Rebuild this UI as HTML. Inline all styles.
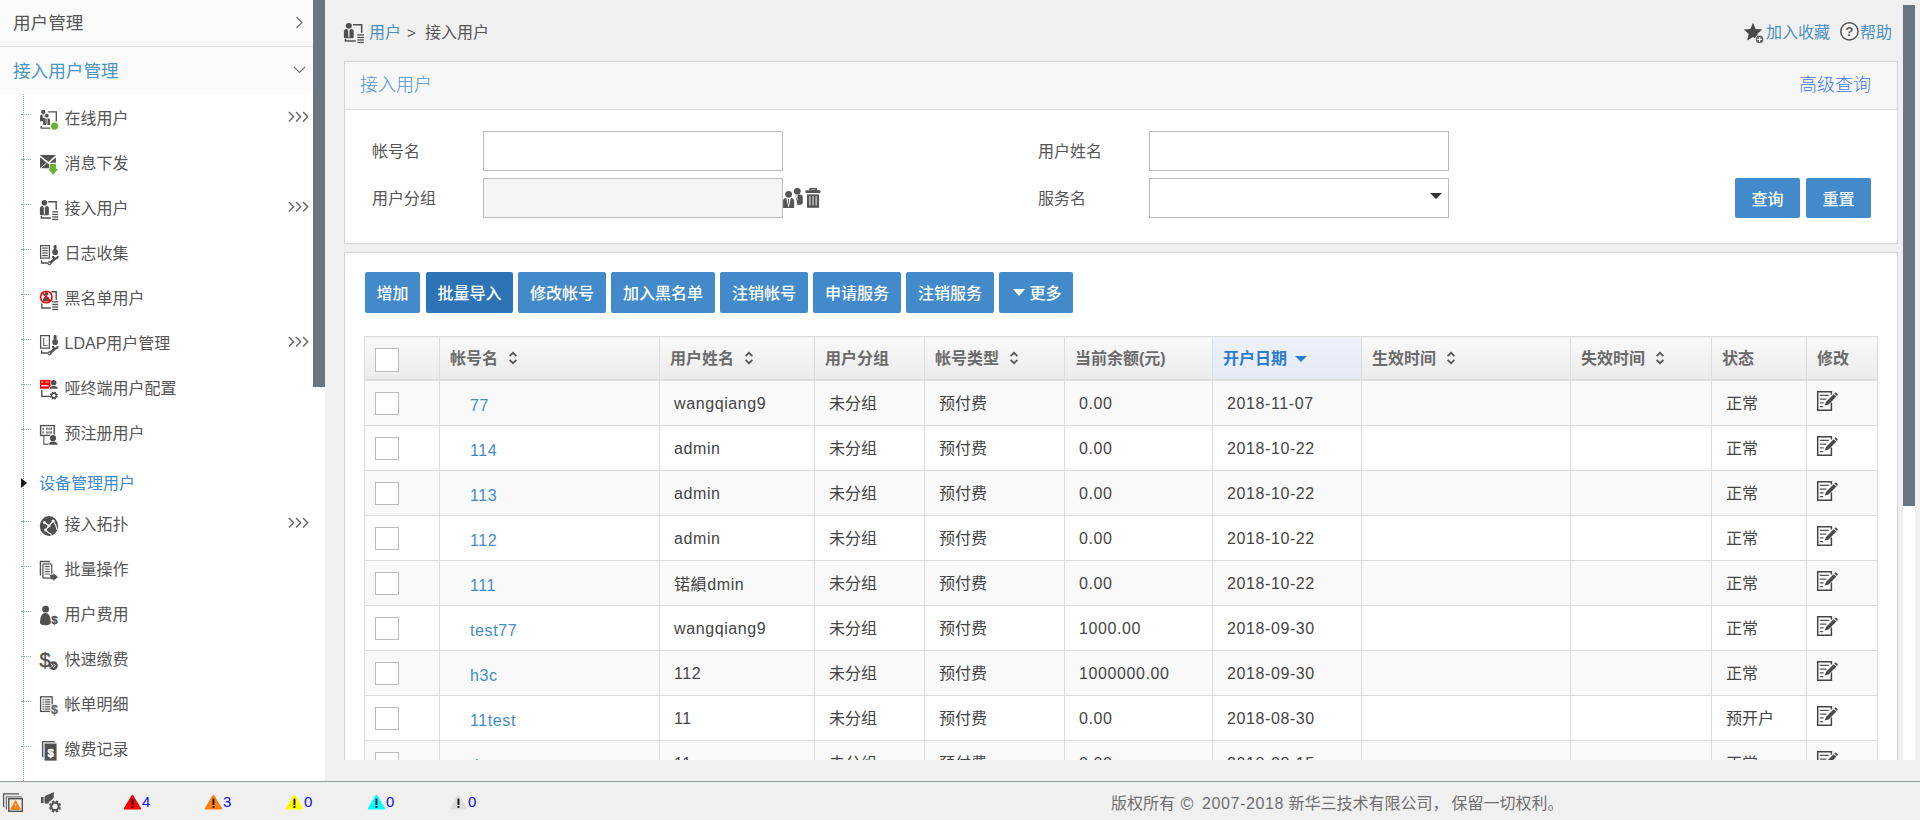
<!DOCTYPE html>
<html lang="zh-CN">
<head>
<meta charset="utf-8">
<title>接入用户</title>
<style>
*{box-sizing:border-box;margin:0;padding:0}
html,body{width:1920px;height:820px;overflow:hidden;background:#f0f0f0}
body{font-family:"Liberation Sans","Noto Sans CJK SC",sans-serif;font-size:16px;color:#555;position:relative}
a{text-decoration:none;color:#428bca}
.abs{position:absolute}
/* ---------- sidebar ---------- */
#side{position:absolute;left:0;top:0;width:325px;height:781px;background:#fff;overflow:hidden}
#side .thumb{position:absolute;left:313px;top:0;width:12px;height:387px;background:#69767f}
.acc{position:absolute;left:0;width:313px;height:47px;background:#fafafa;font-size:17.6px;line-height:26px;padding:10px 0 0 13px;color:#555}
.acc.a1{top:0;border-bottom:1px solid #e3e3e3}
.acc.a2{top:47px;color:#4a97c4;padding-top:11px}
.acc svg{position:absolute}
.tree-v{position:absolute;left:23px;top:94px;width:1px;height:687px;background:repeating-linear-gradient(#8aaed2 0 1px,transparent 1px 2px)}
.item{position:absolute;left:0;width:313px;height:30px}
.item .stub{position:absolute;left:21px;top:10px;width:10px;height:1px;background:linear-gradient(90deg,#8aaed2 0 4px,transparent 4px 5px,#8aaed2 5px 6px,transparent 6px 7px,#8aaed2 7px 8px,transparent 8px 9px,#8aaed2 9px 10px)}
.item .ic{position:absolute;left:36px;top:0}
.item .txt{position:absolute;left:64.5px;top:0;line-height:30px;font-size:16px;color:#555;white-space:nowrap}
.item .more{position:absolute;left:288px;top:7px;width:22px;height:12px}
.grp{position:absolute;left:39px;top:469px;line-height:30px;font-size:16px;color:#3d8ad2}
.grp-arrow{position:absolute;left:20.5px;top:477.6px;width:0;height:0;border-left:6.6px solid #1c1c1c;border-top:5px solid transparent;border-bottom:5px solid transparent;z-index:2}
/* ---------- main ---------- */
#main{position:absolute;left:325px;top:0;width:1595px;height:760px;overflow:hidden}
.crumb{position:absolute;top:18px;line-height:30px;font-size:16px;white-space:nowrap}
.panel{position:absolute;left:19px;width:1554px;background:#fff;border:1px solid #d4d4d4}
.phead{position:absolute;left:0;top:0;width:100%;height:48px;background:#f7f7f7;border-bottom:1px solid #ddd}
.lbl{position:absolute;line-height:30px;font-size:16px;color:#555;white-space:nowrap}
.inp{position:absolute;width:300px;height:40px;border:1px solid #bcbcbc;background:#fff}
.btn{position:absolute;height:41px;line-height:44px;overflow:hidden;background:#438aca;color:#fff;font-weight:500;font-size:16px;text-align:center;border-radius:2px;white-space:nowrap}
.btn.dk{background:#2c74b5}
.vthumb{position:absolute;left:1578px;top:5px;width:12px;height:501px;background:#69767f}
.vtrack{position:absolute;left:1578px;top:506px;width:12px;height:254px;background:#fff}
/* table */
#tb{position:absolute;left:19px;top:83px;border-collapse:collapse;table-layout:fixed;font-size:16px;color:#444}
#tb th,#tb td{border:1px solid #ddd;height:45px;padding:0;text-align:left;white-space:nowrap;overflow:hidden;vertical-align:middle}
#tb th{height:44px;font-weight:bold;color:#6b6b6b;padding-left:10px;padding-bottom:4px;background:linear-gradient(#ddd,#ddd) bottom/100% 1px no-repeat,linear-gradient(#f9f9f9,#ebebeb)}
#tb th.sorted{color:#2e7bcf;background:linear-gradient(#ddd,#ddd) bottom/100% 1px no-repeat,linear-gradient(#eef2f9,#e4e9f3)}
#tb td{padding-left:14px}
#tb tr.o td{background:#f9f9f9}
#tb tr.e td{background:#fff}
#tb td.c,#tb th.c{padding-left:10px}
#tb td.z{padding-bottom:2px}
.cb{display:block;width:24px;height:24px;border:1px solid #bbb;background:#fff}
#tb td .cb{height:23px}
#tb th .cb{position:relative;top:3px}
#tb td.l{letter-spacing:.6px;padding-top:2px}
#tb td.n{padding-left:30px}
#tb td.n{letter-spacing:.6px;padding-top:5px}
.srt{display:inline-block;width:10px;height:14px;margin-left:9.7px;vertical-align:-1px}
/* footer */
#foot{position:absolute;left:0;top:781px;width:1920px;height:39px;background:#f0f0f0;border-top:1px solid #8c999e}
.al{position:absolute;top:11px;height:18px;line-height:18px;font-size:15px;color:#0c0cf8;white-space:nowrap}
.al svg{position:absolute;left:0;top:1px}
.cp{position:absolute;top:7px;line-height:30px;font-size:16px;color:#6e6e6e;white-space:nowrap}
</style>
</head>
<body>
<div id="side">
  <div class="acc a1">用户管理
    <svg style="left:295px;top:16px" width="9" height="13" viewBox="0 0 9 13"><path d="M1.5 1 L7 6.5 L1.5 12" fill="none" stroke="#777" stroke-width="1.2"/></svg>
  </div>
  <div class="acc a2">接入用户管理
    <svg style="left:293px;top:19px" width="13" height="8" viewBox="0 0 13 8"><path d="M1 1 L6.5 6.5 L12 1" fill="none" stroke="#777" stroke-width="1.2"/></svg>
  </div>
  <div class="tree-v"></div>
  <div class="item" style="top:104px"><span class="stub" style="top:10px"></span><svg class="ic" width="28" height="30" viewBox="0 0 28 30" ><circle cx="7.3" cy="7.9" r="2.15" fill="#505050"/><path d="M4 16.6 L4.1 12 Q4.4 10.5 6 10.5 H8.2 V17.2 H4.6 Q4 17.2 4 16.6 Z" fill="#505050"/><path d="M6.2 10.6 H8.4 V14 H6.8 Z" fill="#ddd"/><circle cx="10.8" cy="11.7" r="2.15" fill="#505050" stroke="#fff" stroke-width="0.5"/><path d="M7.1 20.3 L7.2 15.8 Q7.5 14.3 9 14.3 H12.2 Q13.8 14.3 14 15.8 L14.1 20.3 Q14.1 20.9 13.5 20.9 H7.7 Q7.1 20.9 7.1 20.3 Z" fill="#505050"/><path d="M9.5 14.3 L10 20.9 H11.4 L11.9 14.3 Z" fill="#e4e4e4"/><path d="M10.7 15 V20" stroke="#505050" stroke-width="0.7"/><path d="M12.2 7.9 H20.3 V17.4" fill="none" stroke="#505050" stroke-width="1.3"/><path d="M5.2 22 V24.1 H14.2" fill="none" stroke="#505050" stroke-width="1.4"/><circle cx="18.5" cy="22.1" r="3.6" fill="#6bb130"/></svg><span class="txt">在线用户</span><svg class="more" width="23" height="12" viewBox="0 0 23 12"><path d="M1 0.8 L5.8 5.7 L1 10.6 M8.4 0.8 L13.2 5.7 L8.4 10.6 M15.8 0.8 L20.6 5.7 L15.8 10.6" fill="none" stroke="#666" stroke-width="1.5"/></svg></div>
  <div class="item" style="top:149px"><span class="stub" style="top:10px"></span><svg class="ic" width="28" height="30" viewBox="0 0 28 30" ><path d="M4 5.9 H19.9 V13.7 H13 V19.2 H4 Z" fill="#505050"/><path d="M3.6 6.9 L12.4 13.9 L20.3 6.9" fill="none" stroke="#fff" stroke-width="1.5"/><path d="M4.2 19.4 L10.6 14" fill="none" stroke="#fff" stroke-width="1"/><path d="M13.7 15 H19.9 V19.9 H22 L17.2 25.8 L12.4 19.9 H13.7 Z" fill="#6bb130"/></svg><span class="txt">消息下发</span></div>
  <div class="item" style="top:194px"><span class="stub" style="top:10px"></span><svg class="ic" width="28" height="30" viewBox="0 0 28 30" ><circle cx="8.4" cy="8.8" r="2.8" fill="#505050"/><path d="M3.9000000000000004 20.1 V14.0 Q4.1000000000000005 12.0 6.300000000000001 12.0 H10.5 Q12.700000000000001 12.0 12.9 14.0 V20.1 Q12.9 21.3 11.700000000000001 21.3 H5.1000000000000005 Q3.9000000000000004 21.3 3.9000000000000004 20.1 Z" fill="#505050"/><path d="M6.9 12.0 L8.4 15.4 L9.9 12.0 Z" fill="#e8e8e8"/><path d="M7.7 15.0 L8.4 14.0 L9.1 15.0 L8.9 20.4 H7.9 Z" fill="#ddd"/><path d="M12.2 7.7 H20.2 V15.8" fill="none" stroke="#505050" stroke-width="1.4"/><path d="M5.3 22 V24 H14.8" fill="none" stroke="#505050" stroke-width="1.3"/><rect x="16.2" y="17.2" width="6" height="1.3" fill="#505050"/><rect x="16.2" y="19.8" width="6" height="1.3" fill="#505050"/><rect x="16.2" y="22.3" width="6" height="1.3" fill="#505050"/><rect x="16.2" y="24.8" width="6" height="1.3" fill="#505050"/></svg><span class="txt">接入用户</span><svg class="more" width="23" height="12" viewBox="0 0 23 12"><path d="M1 0.8 L5.8 5.7 L1 10.6 M8.4 0.8 L13.2 5.7 L8.4 10.6 M15.8 0.8 L20.6 5.7 L15.8 10.6" fill="none" stroke="#666" stroke-width="1.5"/></svg></div>
  <div class="item" style="top:239px"><span class="stub" style="top:10px"></span><svg class="ic" width="28" height="30" viewBox="0 0 28 30" ><rect x="4.6" y="6.6" width="8.8" height="12.5" fill="#fff" stroke="#505050" stroke-width="1.25"/><rect x="6.2" y="8.5" width="5.6" height="1.2" fill="#505050"/><rect x="6.2" y="11" width="5.6" height="1.2" fill="#505050"/><rect x="6.2" y="13.5" width="5.6" height="1.2" fill="#505050"/><rect x="6.2" y="16" width="5.6" height="1.2" fill="#505050"/><path d="M13.6 24.2 L19.2 19.4" stroke="#505050" stroke-width="2.6" fill="none"/><circle cx="13.5" cy="24.3" r="2.1" fill="#505050"/><circle cx="13.4" cy="24.4" r="0.85" fill="#fff"/><path d="M16.9 16.9 A2.45 2.45 0 0 0 21.8 16.9" fill="none" stroke="#505050" stroke-width="1.9"/><rect x="17.6" y="5.9" width="3" height="4.4" rx="1.2" fill="#505050"/><ellipse cx="19.1" cy="13" rx="2.9" ry="3.1" fill="#505050"/><path d="M5.6 21.2 V24 H11.6" fill="none" stroke="#505050" stroke-width="1.4"/></svg><span class="txt">日志收集</span></div>
  <div class="item" style="top:284px"><span class="stub" style="top:10px"></span><svg class="ic" width="28" height="30" viewBox="0 0 28 30" ><circle cx="10.4" cy="9.7" r="2" fill="#505050"/><path d="M7 17.2 Q7 12.2 10.3 12.2 Q13.6 12.2 13.6 17.2 Z" fill="#505050"/><path d="M15.4 7.7 H20.2 V15.8" fill="none" stroke="#505050" stroke-width="1.4"/><path d="M5.8 19.4 V24 H14.8" fill="none" stroke="#505050" stroke-width="1.4"/><rect x="16.2" y="17.2" width="6" height="1.3" fill="#505050"/><rect x="16.2" y="19.8" width="6" height="1.3" fill="#505050"/><rect x="16.2" y="22.3" width="6" height="1.3" fill="#505050"/><rect x="16.2" y="24.8" width="6" height="1.3" fill="#505050"/><circle cx="10.3" cy="13" r="5.75" fill="none" stroke="#fb0a0a" stroke-width="1.7"/><path d="M6.3 9 L14.3 17" stroke="#fb0a0a" stroke-width="1.6"/></svg><span class="txt">黑名单用户</span></div>
  <div class="item" style="top:329px"><span class="stub" style="top:10px"></span><svg class="ic" width="28" height="30" viewBox="0 0 28 30" ><rect x="4.6" y="6.6" width="8.8" height="12.5" fill="#fff" stroke="#505050" stroke-width="1.25"/><text x="6.2" y="17" font-family="Liberation Sans,sans-serif" font-size="10.5" fill="#505050">L</text><path d="M13.6 24.2 L19.2 19.4" stroke="#505050" stroke-width="2.6" fill="none"/><circle cx="13.5" cy="24.3" r="2.1" fill="#505050"/><circle cx="13.4" cy="24.4" r="0.85" fill="#fff"/><path d="M16.9 16.9 A2.45 2.45 0 0 0 21.8 16.9" fill="none" stroke="#505050" stroke-width="1.9"/><rect x="17.6" y="5.9" width="3" height="4.4" rx="1.2" fill="#505050"/><ellipse cx="19.1" cy="13" rx="2.9" ry="3.1" fill="#505050"/><path d="M5.6 21.2 V24 H11.6" fill="none" stroke="#505050" stroke-width="1.4"/></svg><span class="txt">LDAP用户管理</span><svg class="more" width="23" height="12" viewBox="0 0 23 12"><path d="M1 0.8 L5.8 5.7 L1 10.6 M8.4 0.8 L13.2 5.7 L8.4 10.6 M15.8 0.8 L20.6 5.7 L15.8 10.6" fill="none" stroke="#666" stroke-width="1.5"/></svg></div>
  <div class="item" style="top:374px"><span class="stub" style="top:10px"></span><svg class="ic" width="28" height="30" viewBox="0 0 28 30" ><rect x="4" y="5.9" width="10.7" height="8.8" fill="#fb0505"/><rect x="5.3" y="7.4" width="2" height="1.2" fill="#fff" opacity=".9"/><rect x="9.8" y="7.4" width="1" height="1.2" fill="#fff" opacity=".9"/><rect x="11.6" y="7.4" width="1" height="1.2" fill="#fff" opacity=".9"/><rect x="5.2" y="11.1" width="7.4" height="1.2" fill="#fff"/><circle cx="17.7" cy="8.7" r="3.2" fill="#fff"/><circle cx="17.7" cy="8.7" r="2.8" fill="#505050"/><path d="M13 15 Q13.2 11.4 17.7 11.6 Q22.2 11.4 22.4 15 Z" fill="#fff"/><path d="M13.6 14.7 Q13.8 12 17.7 12.1 Q21.6 12 21.9 14.7 Z" fill="#505050"/><path d="M5.8 16 V22.4 H14.4" fill="none" stroke="#505050" stroke-width="1.4"/><circle cx="17.9" cy="21.6" r="3.0" fill="#505050"/><rect x="17.05" y="17.60" width="1.7" height="1.80" rx="0.3" fill="#505050" transform="rotate(22.5 17.9 21.6)"/><rect x="17.05" y="17.60" width="1.7" height="1.80" rx="0.3" fill="#505050" transform="rotate(67.5 17.9 21.6)"/><rect x="17.05" y="17.60" width="1.7" height="1.80" rx="0.3" fill="#505050" transform="rotate(112.5 17.9 21.6)"/><rect x="17.05" y="17.60" width="1.7" height="1.80" rx="0.3" fill="#505050" transform="rotate(157.5 17.9 21.6)"/><rect x="17.05" y="17.60" width="1.7" height="1.80" rx="0.3" fill="#505050" transform="rotate(202.5 17.9 21.6)"/><rect x="17.05" y="17.60" width="1.7" height="1.80" rx="0.3" fill="#505050" transform="rotate(247.5 17.9 21.6)"/><rect x="17.05" y="17.60" width="1.7" height="1.80" rx="0.3" fill="#505050" transform="rotate(292.5 17.9 21.6)"/><rect x="17.05" y="17.60" width="1.7" height="1.80" rx="0.3" fill="#505050" transform="rotate(337.5 17.9 21.6)"/><circle cx="17.9" cy="21.6" r="1.6" fill="#fff"/></svg><span class="txt">哑终端用户配置</span></div>
  <div class="item" style="top:419px"><span class="stub" style="top:10px"></span><svg class="ic" width="28" height="30" viewBox="0 0 28 30" ><rect x="4.6" y="6.6" width="13.6" height="9.8" fill="#fff" stroke="#505050" stroke-width="1.4"/><rect x="6.3" y="8.7" width="1.7" height="2.1" fill="#777"/><rect x="10" y="8.7" width="6" height="2.1" fill="#9a9a9a"/><rect x="10" y="8.7" width="1.2" height="2.1" fill="#777"/><rect x="14.8" y="8.7" width="1.2" height="2.1" fill="#777"/><rect x="6.3" y="12.4" width="1.7" height="2.1" fill="#777"/><rect x="10" y="12.4" width="6" height="2.1" fill="#9a9a9a"/><rect x="10" y="12.4" width="1.2" height="2.1" fill="#777"/><rect x="14.8" y="12.4" width="1.2" height="2.1" fill="#777"/><path d="M7.9 17 V25.2 H13.4" fill="none" stroke="#777" stroke-width="1.4"/><circle cx="17" cy="19.2" r="3.9" fill="#fff"/><circle cx="17" cy="19.2" r="3.1" fill="#505050"/><path d="M12.4 26 Q12.6 21.6 17 22 Q21.6 21.6 22.2 26 Z" fill="#fff"/><path d="M13 25.8 Q13.4 22.4 17 22.6 Q21 22.4 21.8 25.8 Z" fill="#505050"/></svg><span class="txt">预注册用户</span></div>
  <span class="grp-arrow"></span><a class="grp">设备管理用户</a>
  <div class="item" style="top:510px"><span class="stub" style="top:11px"></span><svg class="ic" width="28" height="30" viewBox="0 0 28 30" ><ellipse cx="13" cy="16" rx="9.2" ry="9.9" fill="#505050"/><path d="M8.4 12.6 L13 15.9 L17.2 11 M13 15.9 L9.6 19.9" stroke="#fff" stroke-width="1.3" fill="none"/><path d="M17.2 11 Q20.4 14.6 21 20 M9.6 19.9 Q12 23 15.6 24.6" stroke="#fff" stroke-width="1.1" fill="none"/><circle cx="8.4" cy="12.6" r="1.5" fill="#fff"/><circle cx="13" cy="15.9" r="1.5" fill="#fff"/><circle cx="17.2" cy="11" r="1.5" fill="#fff"/><circle cx="9.6" cy="19.9" r="1.5" fill="#fff"/></svg><span class="txt">接入拓扑</span><svg class="more" width="23" height="12" viewBox="0 0 23 12"><path d="M1 0.8 L5.8 5.7 L1 10.6 M8.4 0.8 L13.2 5.7 L8.4 10.6 M15.8 0.8 L20.6 5.7 L15.8 10.6" fill="none" stroke="#666" stroke-width="1.5"/></svg></div>
  <div class="item" style="top:555px"><span class="stub" style="top:11px"></span><svg class="ic" width="28" height="30" viewBox="0 0 28 30" ><path d="M4.4 20.6 V6.5 H14" fill="none" stroke="#505050" stroke-width="1.3"/><rect x="6.9" y="8.9" width="8.8" height="14" rx="0.8" fill="#fff" stroke="#6e6e6e" stroke-width="1.5"/><rect x="8.8" y="10.9" width="5" height="1.3" fill="#555"/><rect x="8.8" y="13.5" width="5" height="1.3" fill="#888"/><rect x="8.8" y="15.9" width="5" height="1.3" fill="#555"/><rect x="8.8" y="18.4" width="5" height="1.3" fill="#888"/><path d="M14.3 20 H17.4 V18.2 L21.9 22.1 L17.4 26 V24.3 H14.3 Z" fill="#505050" stroke="#fff" stroke-width="0.7" paint-order="stroke"/></svg><span class="txt">批量操作</span></div>
  <div class="item" style="top:600px"><span class="stub" style="top:11px"></span><svg class="ic" width="28" height="30" viewBox="0 0 28 30" ><circle cx="9.6" cy="9.2" r="3.4" fill="#505050"/><path d="M4 22.6 Q4 13 9.4 13 Q14.6 13 14.8 22.6 Q14.6 25.2 9.4 25.2 Q4.2 25.2 4 22.6 Z" fill="#505050"/><text x="15.3" y="23.8" font-family="Liberation Sans,sans-serif" font-weight="bold" font-size="11.6" fill="#505050" stroke="#505050" stroke-width="0.3">$</text></svg><span class="txt">用户费用</span></div>
  <div class="item" style="top:645px"><span class="stub" style="top:11px"></span><svg class="ic" width="28" height="30" viewBox="0 0 28 30" ><text x="3.4" y="21.5" font-family="Liberation Sans,sans-serif" font-size="20" fill="#505050" stroke="#505050" stroke-width="0.4">$</text><circle cx="17.4" cy="20.7" r="4.4" fill="#505050"/><path d="M14.9 18.8 L16.7 20.7 L14.9 22.6 M17.5 18.8 L19.3 20.7 L17.5 22.6" fill="none" stroke="#fff" stroke-width="1"/></svg><span class="txt">快速缴费</span></div>
  <div class="item" style="top:690px"><span class="stub" style="top:11px"></span><svg class="ic" width="28" height="30" viewBox="0 0 28 30" ><rect x="4.6" y="6.8" width="11.6" height="14.6" fill="#fff" stroke="#505050" stroke-width="1.3"/><rect x="6.4" y="8.8" width="1.4" height="1.5" fill="#777"/><rect x="8.6" y="8.8" width="5.8" height="1.5" fill="#777"/><rect x="6.4" y="11.2" width="1.4" height="1.5" fill="#777"/><rect x="8.6" y="11.2" width="5.8" height="1.5" fill="#777"/><rect x="6.4" y="13.6" width="1.4" height="1.5" fill="#777"/><rect x="8.6" y="13.6" width="5.8" height="1.5" fill="#777"/><rect x="6.4" y="16" width="1.4" height="1.5" fill="#777"/><rect x="8.6" y="16" width="5.8" height="1.5" fill="#777"/><rect x="6.4" y="18.4" width="1.4" height="1.5" fill="#777"/><rect x="8.6" y="18.4" width="5.8" height="1.5" fill="#777"/><text x="15" y="24" font-family="Liberation Sans,sans-serif" font-weight="bold" font-size="12.4" fill="#fff" stroke="#fff" stroke-width="2">$</text><text x="15" y="24" font-family="Liberation Sans,sans-serif" font-weight="bold" font-size="12.4" fill="#666" stroke="#666" stroke-width="0.3">$</text></svg><span class="txt">帐单明细</span></div>
  <div class="item" style="top:735px"><span class="stub" style="top:11px"></span><svg class="ic" width="28" height="30" viewBox="0 0 28 30" ><path d="M6.4 22 V6.6 H18.6" fill="none" stroke="#505050" stroke-width="1.1"/><path d="M7.6 23 V7.8 H19.6" fill="none" stroke="#aaa" stroke-width="0.9"/><rect x="8.6" y="8.6" width="12" height="17" fill="#505050"/><text x="11.4" y="21.5" font-family="Liberation Sans,sans-serif" font-weight="bold" font-size="11.5" fill="#fff" stroke="#fff" stroke-width="0.4">$</text></svg><span class="txt">缴费记录</span></div>
  <div class="thumb"></div>
</div>

<div id="main">
  <svg class="abs" style="left:15px;top:17px" width="28" height="30" viewBox="0 0 28 30" ><g transform="translate(-0.36 0) scale(1.09 1)"><circle cx="8.4" cy="8.8" r="2.8" fill="#505050"/><path d="M3.9000000000000004 20.1 V14.0 Q4.1000000000000005 12.0 6.300000000000001 12.0 H10.5 Q12.700000000000001 12.0 12.9 14.0 V20.1 Q12.9 21.3 11.700000000000001 21.3 H5.1000000000000005 Q3.9000000000000004 21.3 3.9000000000000004 20.1 Z" fill="#505050"/><path d="M6.9 12.0 L8.4 15.4 L9.9 12.0 Z" fill="#e8e8e8"/><path d="M7.7 15.0 L8.4 14.0 L9.1 15.0 L8.9 20.4 H7.9 Z" fill="#ddd"/><path d="M12.2 7.7 H20.2 V15.8" fill="none" stroke="#505050" stroke-width="1.4"/><path d="M5.3 22 V24 H14.8" fill="none" stroke="#505050" stroke-width="1.3"/><rect x="16.2" y="17.2" width="6" height="1.3" fill="#505050"/><rect x="16.2" y="19.8" width="6" height="1.3" fill="#505050"/><rect x="16.2" y="22.3" width="6" height="1.3" fill="#505050"/><rect x="16.2" y="24.8" width="6" height="1.3" fill="#505050"/></g></svg><a class="crumb" style="left:44px;color:#4a90c4">用户</a><span class="crumb" style="left:82px;color:#555;font-size:15px">&gt;</span><span class="crumb" style="left:100px;color:#555">接入用户</span><svg class="abs" style="left:1418px;top:22px" width="23" height="23" viewBox="0 0 23 23"><path d="M10 0.8 L12.7 7 L19.2 7.6 L14.3 12 L15.8 18.6 L10 15.1 L4.2 18.6 L5.7 12 L0.8 7.6 L7.3 7 Z" fill="#4a4a4a"/><circle cx="16.6" cy="17.4" r="4.7" fill="#f0f0f0"/><circle cx="16.6" cy="17.4" r="3.8" fill="#666"/><path d="M14.2 17.4 H19 M16.6 15 V19.8" stroke="#fff" stroke-width="1.2"/></svg><a class="crumb" style="left:1441px;color:#4a90c4">加入收藏</a><svg class="abs" style="left:1514px;top:21px" width="21" height="21" viewBox="0 0 21 21"><circle cx="10.4" cy="10.4" r="8.6" fill="#f7f7f7" stroke="#555" stroke-width="1.5"/><text x="10.4" y="15.2" text-anchor="middle" font-family="Liberation Sans,sans-serif" font-weight="bold" font-size="13.5" fill="#5a5a5a">?</text></svg><a class="crumb" style="left:1535px;color:#4a90c4">帮助</a>
  <div class="panel" style="top:61px;height:183px"><div class="phead"></div><span class="abs" style="left:15px;top:8px;line-height:30px;font-size:18px;font-weight:300;color:#4f93c6">接入用户</span><a class="abs" style="left:1454px;top:8px;line-height:30px;font-size:18px;font-weight:300;color:#3f78ea">高级查询</a><span class="lbl" style="left:27px;top:75px">帐号名</span><span class="lbl" style="left:27px;top:122px">用户分组</span><span class="lbl" style="left:693px;top:75px">用户姓名</span><span class="lbl" style="left:693px;top:122px">服务名</span><span class="inp" style="left:138px;top:69px"></span><span class="inp" style="left:138px;top:116px;background:#f5f5f5"></span><span class="inp" style="left:804px;top:69px"></span><span class="inp" style="left:804px;top:116px"></span><span class="abs" style="left:1085px;top:131px;width:0;height:0;border-left:6px solid transparent;border-right:6px solid transparent;border-top:6.2px solid #333"></span><svg class="abs" style="left:437px;top:125px" width="22" height="22" viewBox="0 0 22 22"><circle cx="15.3" cy="4.3" r="3.4" fill="#555"/><path d="M13.4 8.2 L17.6 7.6 Q20.6 7.8 20.8 10.4 V16 Q20.6 17.6 18.6 17.8 L15.6 18 Z" fill="#555"/><path d="M13.2 8 L15.8 7.6 L15.4 13.6 Z" fill="#fff"/><path d="M14.6 8.6 L15.5 8.4 L15.3 12 Z" fill="#555"/><circle cx="6.6" cy="7.3" r="3.4" fill="#555"/><path d="M1.1 20.9 V14 Q1.2 11.4 4 11 L9.2 11 Q12 11.4 12.1 14 V20.9 Q11.8 21 11 21 H2.2 Q1.4 21 1.1 20.9 Z" fill="#555"/><path d="M4.2 11 L6.6 20.9 L9 11 Z" fill="#fff"/><path d="M6 12 H7.2 L7 16.4 L6.6 17.6 L6.2 16.4 Z" fill="#555"/></svg><svg class="abs" style="left:459px;top:125px" width="18" height="22" viewBox="0 0 18 22"><rect x="5.3" y="1.1" width="7.7" height="3" rx="0.8" fill="#555"/><rect x="7" y="2.1" width="4.3" height="1.1" fill="#aaa"/><rect x="1.4" y="3.3" width="15.2" height="2.7" rx="1" fill="#555"/><rect x="3" y="7.4" width="12.1" height="13.4" fill="#555"/><rect x="5" y="9" width="1.6" height="9.4" fill="#b5b5b5"/><rect x="8.2" y="9" width="1.6" height="9.4" fill="#b5b5b5"/><rect x="11.4" y="9" width="1.6" height="9.4" fill="#b5b5b5"/></svg><span class="btn" style="left:1390px;top:116px;width:65px;height:40px;line-height:43px">查询</span><span class="btn" style="left:1461px;top:116px;width:65px;height:40px;line-height:43px">重置</span></div>
  <div class="panel" style="top:252px;height:520px"><span class="btn" style="left:20px;top:19px;width:55px">增加</span><span class="btn dk" style="left:81px;top:19px;width:87px">批量导入</span><span class="btn" style="left:173px;top:19px;width:88px">修改帐号</span><span class="btn" style="left:266px;top:19px;width:104px">加入黑名单</span><span class="btn" style="left:375px;top:19px;width:88px">注销帐号</span><span class="btn" style="left:468px;top:19px;width:88px">申请服务</span><span class="btn" style="left:561px;top:19px;width:88px">注销服务</span><span class="btn" style="left:654px;top:19px;width:74px;padding-left:19px"><i class="abs" style="left:13.7px;top:17px;width:0;height:0;border-left:6.3px solid transparent;border-right:6.3px solid transparent;border-top:7px solid #fff"></i>更多</span><table id="tb"><colgroup><col style="width:75px"><col style="width:220px"><col style="width:155px"><col style="width:110px"><col style="width:140px"><col style="width:148px"><col style="width:149px"><col style="width:209px"><col style="width:141px"><col style="width:95px"><col style="width:71px"></colgroup><thead><tr><th class="c"><span class="cb"></span></th><th>帐号名<svg class="srt" viewBox="0 0 10 14"><path d="M1.6 5.2 L5 1.8 L8.4 5.2 M1.6 8.8 L5 12.2 L8.4 8.8" fill="none" stroke="#555" stroke-width="1.7"/></svg></th><th>用户姓名<svg class="srt" viewBox="0 0 10 14"><path d="M1.6 5.2 L5 1.8 L8.4 5.2 M1.6 8.8 L5 12.2 L8.4 8.8" fill="none" stroke="#555" stroke-width="1.7"/></svg></th><th>用户分组</th><th>帐号类型<svg class="srt" viewBox="0 0 10 14"><path d="M1.6 5.2 L5 1.8 L8.4 5.2 M1.6 8.8 L5 12.2 L8.4 8.8" fill="none" stroke="#555" stroke-width="1.7"/></svg></th><th>当前余额(元)</th><th class="sorted">开户日期<i style="display:inline-block;margin-left:8px;vertical-align:2px;width:0;height:0;border-left:6px solid transparent;border-right:6px solid transparent;border-top:6.5px solid #2e7bcf"></i></th><th>生效时间<svg class="srt" viewBox="0 0 10 14"><path d="M1.6 5.2 L5 1.8 L8.4 5.2 M1.6 8.8 L5 12.2 L8.4 8.8" fill="none" stroke="#555" stroke-width="1.7"/></svg></th><th>失效时间<svg class="srt" viewBox="0 0 10 14"><path d="M1.6 5.2 L5 1.8 L8.4 5.2 M1.6 8.8 L5 12.2 L8.4 8.8" fill="none" stroke="#555" stroke-width="1.7"/></svg></th><th>状态</th><th>修改</th></tr></thead><tbody><tr class="o"><td class="c"><span class="cb"></span></td><td class="n"><a>77</a></td><td class="l">wangqiang9</td><td class="z">未分组</td><td class="z">预付费</td><td class="l">0.00</td><td class="l">2018-11-07</td><td></td><td></td><td class="z">正常</td><td class="c"><svg width="22" height="22" viewBox="0 0 22 22" style="display:block;position:relative;top:-2px;left:-1px"><path d="M15.4 4.6 V1.8 H1.7 V20.2 H15.4 V12.6" fill="none" stroke="#444" stroke-width="1.5"/><path d="M3.8 5.3 H12.8 M3.8 9.2 H10.4 M3.8 12.9 H7.6 M3.8 16.6 H7.2" stroke="#555" stroke-width="1.2"/><path d="M17.6 4.2 L20.4 6.6 L12.6 14.6 L8.6 15.6 L10 12 Z" fill="#4a4a4a"/><path d="M18.4 3.4 L19.2 2.6 Q19.8 2.2 20.6 3 L21.6 4 Q22 4.8 21.6 5.2 L20.9 5.9 Z" fill="#4a4a4a"/></svg></td></tr><tr class="e"><td class="c"><span class="cb"></span></td><td class="n"><a>114</a></td><td class="l">admin</td><td class="z">未分组</td><td class="z">预付费</td><td class="l">0.00</td><td class="l">2018-10-22</td><td></td><td></td><td class="z">正常</td><td class="c"><svg width="22" height="22" viewBox="0 0 22 22" style="display:block;position:relative;top:-2px;left:-1px"><path d="M15.4 4.6 V1.8 H1.7 V20.2 H15.4 V12.6" fill="none" stroke="#444" stroke-width="1.5"/><path d="M3.8 5.3 H12.8 M3.8 9.2 H10.4 M3.8 12.9 H7.6 M3.8 16.6 H7.2" stroke="#555" stroke-width="1.2"/><path d="M17.6 4.2 L20.4 6.6 L12.6 14.6 L8.6 15.6 L10 12 Z" fill="#4a4a4a"/><path d="M18.4 3.4 L19.2 2.6 Q19.8 2.2 20.6 3 L21.6 4 Q22 4.8 21.6 5.2 L20.9 5.9 Z" fill="#4a4a4a"/></svg></td></tr><tr class="o"><td class="c"><span class="cb"></span></td><td class="n"><a>113</a></td><td class="l">admin</td><td class="z">未分组</td><td class="z">预付费</td><td class="l">0.00</td><td class="l">2018-10-22</td><td></td><td></td><td class="z">正常</td><td class="c"><svg width="22" height="22" viewBox="0 0 22 22" style="display:block;position:relative;top:-2px;left:-1px"><path d="M15.4 4.6 V1.8 H1.7 V20.2 H15.4 V12.6" fill="none" stroke="#444" stroke-width="1.5"/><path d="M3.8 5.3 H12.8 M3.8 9.2 H10.4 M3.8 12.9 H7.6 M3.8 16.6 H7.2" stroke="#555" stroke-width="1.2"/><path d="M17.6 4.2 L20.4 6.6 L12.6 14.6 L8.6 15.6 L10 12 Z" fill="#4a4a4a"/><path d="M18.4 3.4 L19.2 2.6 Q19.8 2.2 20.6 3 L21.6 4 Q22 4.8 21.6 5.2 L20.9 5.9 Z" fill="#4a4a4a"/></svg></td></tr><tr class="e"><td class="c"><span class="cb"></span></td><td class="n"><a>112</a></td><td class="l">admin</td><td class="z">未分组</td><td class="z">预付费</td><td class="l">0.00</td><td class="l">2018-10-22</td><td></td><td></td><td class="z">正常</td><td class="c"><svg width="22" height="22" viewBox="0 0 22 22" style="display:block;position:relative;top:-2px;left:-1px"><path d="M15.4 4.6 V1.8 H1.7 V20.2 H15.4 V12.6" fill="none" stroke="#444" stroke-width="1.5"/><path d="M3.8 5.3 H12.8 M3.8 9.2 H10.4 M3.8 12.9 H7.6 M3.8 16.6 H7.2" stroke="#555" stroke-width="1.2"/><path d="M17.6 4.2 L20.4 6.6 L12.6 14.6 L8.6 15.6 L10 12 Z" fill="#4a4a4a"/><path d="M18.4 3.4 L19.2 2.6 Q19.8 2.2 20.6 3 L21.6 4 Q22 4.8 21.6 5.2 L20.9 5.9 Z" fill="#4a4a4a"/></svg></td></tr><tr class="o"><td class="c"><span class="cb"></span></td><td class="n"><a>111</a></td><td class="l" style="padding-top:0">锘縜dmin</td><td class="z">未分组</td><td class="z">预付费</td><td class="l">0.00</td><td class="l">2018-10-22</td><td></td><td></td><td class="z">正常</td><td class="c"><svg width="22" height="22" viewBox="0 0 22 22" style="display:block;position:relative;top:-2px;left:-1px"><path d="M15.4 4.6 V1.8 H1.7 V20.2 H15.4 V12.6" fill="none" stroke="#444" stroke-width="1.5"/><path d="M3.8 5.3 H12.8 M3.8 9.2 H10.4 M3.8 12.9 H7.6 M3.8 16.6 H7.2" stroke="#555" stroke-width="1.2"/><path d="M17.6 4.2 L20.4 6.6 L12.6 14.6 L8.6 15.6 L10 12 Z" fill="#4a4a4a"/><path d="M18.4 3.4 L19.2 2.6 Q19.8 2.2 20.6 3 L21.6 4 Q22 4.8 21.6 5.2 L20.9 5.9 Z" fill="#4a4a4a"/></svg></td></tr><tr class="e"><td class="c"><span class="cb"></span></td><td class="n"><a>test77</a></td><td class="l">wangqiang9</td><td class="z">未分组</td><td class="z">预付费</td><td class="l">1000.00</td><td class="l">2018-09-30</td><td></td><td></td><td class="z">正常</td><td class="c"><svg width="22" height="22" viewBox="0 0 22 22" style="display:block;position:relative;top:-2px;left:-1px"><path d="M15.4 4.6 V1.8 H1.7 V20.2 H15.4 V12.6" fill="none" stroke="#444" stroke-width="1.5"/><path d="M3.8 5.3 H12.8 M3.8 9.2 H10.4 M3.8 12.9 H7.6 M3.8 16.6 H7.2" stroke="#555" stroke-width="1.2"/><path d="M17.6 4.2 L20.4 6.6 L12.6 14.6 L8.6 15.6 L10 12 Z" fill="#4a4a4a"/><path d="M18.4 3.4 L19.2 2.6 Q19.8 2.2 20.6 3 L21.6 4 Q22 4.8 21.6 5.2 L20.9 5.9 Z" fill="#4a4a4a"/></svg></td></tr><tr class="o"><td class="c"><span class="cb"></span></td><td class="n"><a>h3c</a></td><td class="l">112</td><td class="z">未分组</td><td class="z">预付费</td><td class="l">1000000.00</td><td class="l">2018-09-30</td><td></td><td></td><td class="z">正常</td><td class="c"><svg width="22" height="22" viewBox="0 0 22 22" style="display:block;position:relative;top:-2px;left:-1px"><path d="M15.4 4.6 V1.8 H1.7 V20.2 H15.4 V12.6" fill="none" stroke="#444" stroke-width="1.5"/><path d="M3.8 5.3 H12.8 M3.8 9.2 H10.4 M3.8 12.9 H7.6 M3.8 16.6 H7.2" stroke="#555" stroke-width="1.2"/><path d="M17.6 4.2 L20.4 6.6 L12.6 14.6 L8.6 15.6 L10 12 Z" fill="#4a4a4a"/><path d="M18.4 3.4 L19.2 2.6 Q19.8 2.2 20.6 3 L21.6 4 Q22 4.8 21.6 5.2 L20.9 5.9 Z" fill="#4a4a4a"/></svg></td></tr><tr class="e"><td class="c"><span class="cb"></span></td><td class="n"><a>11test</a></td><td class="l">11</td><td class="z">未分组</td><td class="z">预付费</td><td class="l">0.00</td><td class="l">2018-08-30</td><td></td><td></td><td class="z">预开户</td><td class="c"><svg width="22" height="22" viewBox="0 0 22 22" style="display:block;position:relative;top:-2px;left:-1px"><path d="M15.4 4.6 V1.8 H1.7 V20.2 H15.4 V12.6" fill="none" stroke="#444" stroke-width="1.5"/><path d="M3.8 5.3 H12.8 M3.8 9.2 H10.4 M3.8 12.9 H7.6 M3.8 16.6 H7.2" stroke="#555" stroke-width="1.2"/><path d="M17.6 4.2 L20.4 6.6 L12.6 14.6 L8.6 15.6 L10 12 Z" fill="#4a4a4a"/><path d="M18.4 3.4 L19.2 2.6 Q19.8 2.2 20.6 3 L21.6 4 Q22 4.8 21.6 5.2 L20.9 5.9 Z" fill="#4a4a4a"/></svg></td></tr><tr class="o"><td class="c"><span class="cb"></span></td><td class="n"><a>tina</a></td><td class="l">11</td><td class="z">未分组</td><td class="z">预付费</td><td class="l">0.00</td><td class="l">2018-08-15</td><td></td><td></td><td class="z">正常</td><td class="c"><svg width="22" height="22" viewBox="0 0 22 22" style="display:block;position:relative;top:-2px;left:-1px"><path d="M15.4 4.6 V1.8 H1.7 V20.2 H15.4 V12.6" fill="none" stroke="#444" stroke-width="1.5"/><path d="M3.8 5.3 H12.8 M3.8 9.2 H10.4 M3.8 12.9 H7.6 M3.8 16.6 H7.2" stroke="#555" stroke-width="1.2"/><path d="M17.6 4.2 L20.4 6.6 L12.6 14.6 L8.6 15.6 L10 12 Z" fill="#4a4a4a"/><path d="M18.4 3.4 L19.2 2.6 Q19.8 2.2 20.6 3 L21.6 4 Q22 4.8 21.6 5.2 L20.9 5.9 Z" fill="#4a4a4a"/></svg></td></tr></tbody></table></div>
  <div class="vthumb"></div><div class="vtrack"></div>
</div>

<div id="foot">
  <svg class="abs" style="left:2px;top:9.5px" width="23" height="22" viewBox="0 0 23 22"><path d="M1.6 15.3 V1.9 H17" fill="none" stroke="#555" stroke-width="1.3"/><path d="M4.4 17.4 V4.9 H19.8" fill="none" stroke="#777" stroke-width="1.3"/><rect x="6.8" y="6.7" width="13.5" height="12.6" fill="#eee" stroke="#505050" stroke-width="1.4"/><path d="M13.5 9.2 L17.8 17.2 H9.2 Z" fill="#ff800a" stroke="#ff800a" stroke-width="1.6" stroke-linejoin="round"/><rect x="12.9" y="11.6" width="1.2" height="2.6" fill="#ffd9b0"/><rect x="12.4" y="15.6" width="2.2" height="0.9" fill="#ffd9b0"/></svg><svg class="abs" style="left:40px;top:9px" width="23" height="23" viewBox="0 0 23 23"><rect x="1" y="6" width="2" height="6" fill="#555"/><rect x="3" y="6" width="2" height="6" fill="#999"/><path d="M5 5 L13.8 1 V6.4 L9 12.6 L5 12.8 Z" fill="#555"/><circle cx="15" cy="15.4" r="7.2" fill="#f0f0f0"/><circle cx="15" cy="15.4" r="4.6" fill="#555"/><rect x="13.75" y="9.30" width="2.5" height="2.30" rx="0.3" fill="#555" transform="rotate(22.5 15 15.4)"/><rect x="13.75" y="9.30" width="2.5" height="2.30" rx="0.3" fill="#555" transform="rotate(67.5 15 15.4)"/><rect x="13.75" y="9.30" width="2.5" height="2.30" rx="0.3" fill="#555" transform="rotate(112.5 15 15.4)"/><rect x="13.75" y="9.30" width="2.5" height="2.30" rx="0.3" fill="#555" transform="rotate(157.5 15 15.4)"/><rect x="13.75" y="9.30" width="2.5" height="2.30" rx="0.3" fill="#555" transform="rotate(202.5 15 15.4)"/><rect x="13.75" y="9.30" width="2.5" height="2.30" rx="0.3" fill="#555" transform="rotate(247.5 15 15.4)"/><rect x="13.75" y="9.30" width="2.5" height="2.30" rx="0.3" fill="#555" transform="rotate(292.5 15 15.4)"/><rect x="13.75" y="9.30" width="2.5" height="2.30" rx="0.3" fill="#555" transform="rotate(337.5 15 15.4)"/><circle cx="15" cy="15.4" r="2.6" fill="#f0f0f0"/></svg><a class="al" style="left:123px;padding-left:19px"><svg width="19" height="17" viewBox="0 0 19 17"><path d="M9.4 1.8 L17.2 14.6 H1.6 Z" fill="#f00" stroke="#f00" stroke-width="1.8" stroke-linejoin="round"/><rect x="8.5" y="4.6" width="1.9" height="6.4" fill="#111"/><rect x="8.5" y="12" width="1.9" height="1.9" fill="#111"/></svg>4</a><a class="al" style="left:204px;padding-left:19px"><svg width="19" height="17" viewBox="0 0 19 17"><path d="M9.4 1.8 L17.2 14.6 H1.6 Z" fill="#ff7f0e" stroke="#ff7f0e" stroke-width="1.8" stroke-linejoin="round"/><rect x="8.5" y="4.6" width="1.9" height="6.4" fill="#111"/><rect x="8.5" y="12" width="1.9" height="1.9" fill="#111"/></svg>3</a><a class="al" style="left:285px;padding-left:19px"><svg width="19" height="17" viewBox="0 0 19 17"><path d="M9.4 1.8 L17.2 14.6 H1.6 Z" fill="#ff0" stroke="#ff0" stroke-width="1.8" stroke-linejoin="round"/><rect x="8.5" y="4.6" width="1.9" height="6.4" fill="#111"/><rect x="8.5" y="12" width="1.9" height="1.9" fill="#111"/></svg>0</a><a class="al" style="left:367px;padding-left:19px"><svg width="19" height="17" viewBox="0 0 19 17"><path d="M9.4 1.8 L17.2 14.6 H1.6 Z" fill="#0ff" stroke="#0ff" stroke-width="1.8" stroke-linejoin="round"/><rect x="8.5" y="4.6" width="1.9" height="6.4" fill="#111"/><rect x="8.5" y="12" width="1.9" height="1.9" fill="#111"/></svg>0</a><a class="al" style="left:449px;padding-left:19px"><svg width="19" height="17" viewBox="0 0 19 17"><path d="M9.4 1.8 L17.2 14.6 H1.6 Z" fill="#dedede" stroke="#dedede" stroke-width="1.8" stroke-linejoin="round"/><rect x="8.5" y="4.6" width="1.9" height="6.4" fill="#111"/><rect x="8.5" y="12" width="1.9" height="1.9" fill="#111"/></svg>0</a><span class="cp" style="left:1111px">版权所有</span><span class="cp" style="left:1180.5px;font-size:17.5px">©</span><span class="cp" style="left:1202px;letter-spacing:.62px">2007-2018</span><span class="cp" style="left:1288.5px">新华三技术有限公司，</span><span class="cp" style="left:1451.5px">保留一切权利。</span>
</div>
</body>
</html>
